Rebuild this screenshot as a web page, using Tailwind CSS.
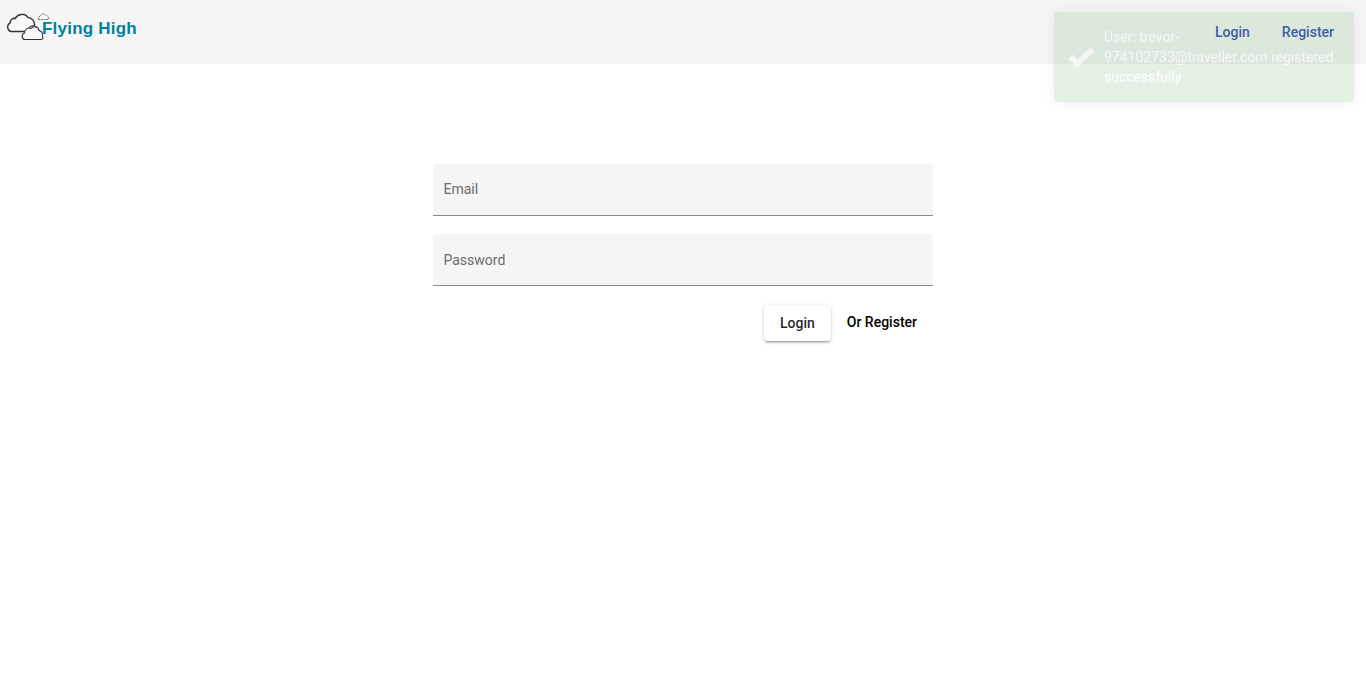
<!DOCTYPE html>
<html lang="en">
<head>
    <meta charset="UTF-8">
    <title>Flying High</title>
    <script src="https://cdn.jsdelivr.net/npm/@tailwindcss/browser@4"></script>
</head>
<body class="bg-white min-h-screen font-['Roboto',sans-serif]">
    <!-- Navbar -->
    <nav class="h-16 bg-[#f5f5f5] flex items-center justify-between pr-4">
        <a href="#" class="flex items-start h-16 pl-[7px] pt-[13px] w-[140px]">
            <svg width="43" height="28" viewBox="0 0 43 28" class="shrink-0 -mr-[8px]" fill="none" stroke="#333333">
                <path d="M5 18.5C0.5 19 -1 12 3 10C3 7 6 4.5 8.5 5.5C10 1 18 -0.5 21 4.5C24.5 4.5 28 8 27.5 13C24 12.5 21 15 20 18.5Z" fill="#f8f8f8" stroke-width="1.4"/>
                <path d="M18 26.5C14.5 26.5 14 21 17.5 20C17.5 16.5 21 14 24 15.5C26.5 12.5 31.5 13.5 32 17.5C34.5 18 36.5 20.5 35.5 23.5C36.5 25 35.5 26.5 34 26.5Z" fill="#f8f8f8" stroke-width="1.1"/>
                <path d="M32 6.5C30.5 6 31 3.5 33 3.5C33.5 1 37 0 38.5 2C40.5 2 41.5 4 41.5 6.5Z" fill="#f8f8f8" stroke-width="0.8" stroke-dasharray="1.5 1"/>
            </svg>
            <span class="font-['Liberation_Sans',sans-serif] font-bold text-[17px] tracking-[0.22px] leading-[31px] text-[#00829b] whitespace-nowrap">Flying High</span>
        </a>
        <div class="flex items-center text-sm font-medium text-[#3f51b5]">
            <a href="#" class="px-4 leading-9">Login</a>
            <a href="#" class="px-4 leading-9">Register</a>
        </div>
    </nav>

    <!-- Login form -->
    <main class="w-[500px] mx-auto mt-[100px]">
        <div class="flex flex-col gap-[18px]">
            <input type="email" placeholder="Email" class="w-full h-[52px] px-[10.5px] pb-[2px] bg-[#f5f5f5] rounded-t border-b border-[#8c8c8c] text-sm outline-none placeholder:text-[#6b6b6b]">
            <input type="password" placeholder="Password" class="w-full h-[52px] px-[10.5px] bg-[#f5f5f5] rounded-t border-b border-[#8c8c8c] text-sm outline-none placeholder:text-[#6b6b6b]">
        </div>
        <div class="flex justify-end items-start mt-[19px]">
            <button class="h-9 px-4 bg-white rounded text-sm font-medium text-black/87 shadow-[0_3px_1px_-2px_rgba(0,0,0,0.2),0_2px_2px_0_rgba(0,0,0,0.14),0_1px_5px_0_rgba(0,0,0,0.12)]">Login</button>
            <button class="h-9 px-4 -mt-px text-sm font-medium text-black">Or Register</button>
        </div>
    </main>

    <!-- Toast sits over the navbar -->
    <div class="fixed top-3 right-3 w-[300px] pl-[50px] pr-[15px] py-[15px] bg-[#51a351] opacity-15 rounded text-sm leading-5 text-white shadow-[0_0_12px_#999]">
        <svg width="28" height="22" viewBox="0 0 28 22" class="absolute left-[13px] top-[34px]" fill="none" stroke="white" stroke-width="5.5">
            <path d="M3.5 10.5L10.5 17.5L25.5 3.5"/>
        </svg>
        User: trevor-974102733@traveller.com registered successfully
    </div>
</body>
</html>
